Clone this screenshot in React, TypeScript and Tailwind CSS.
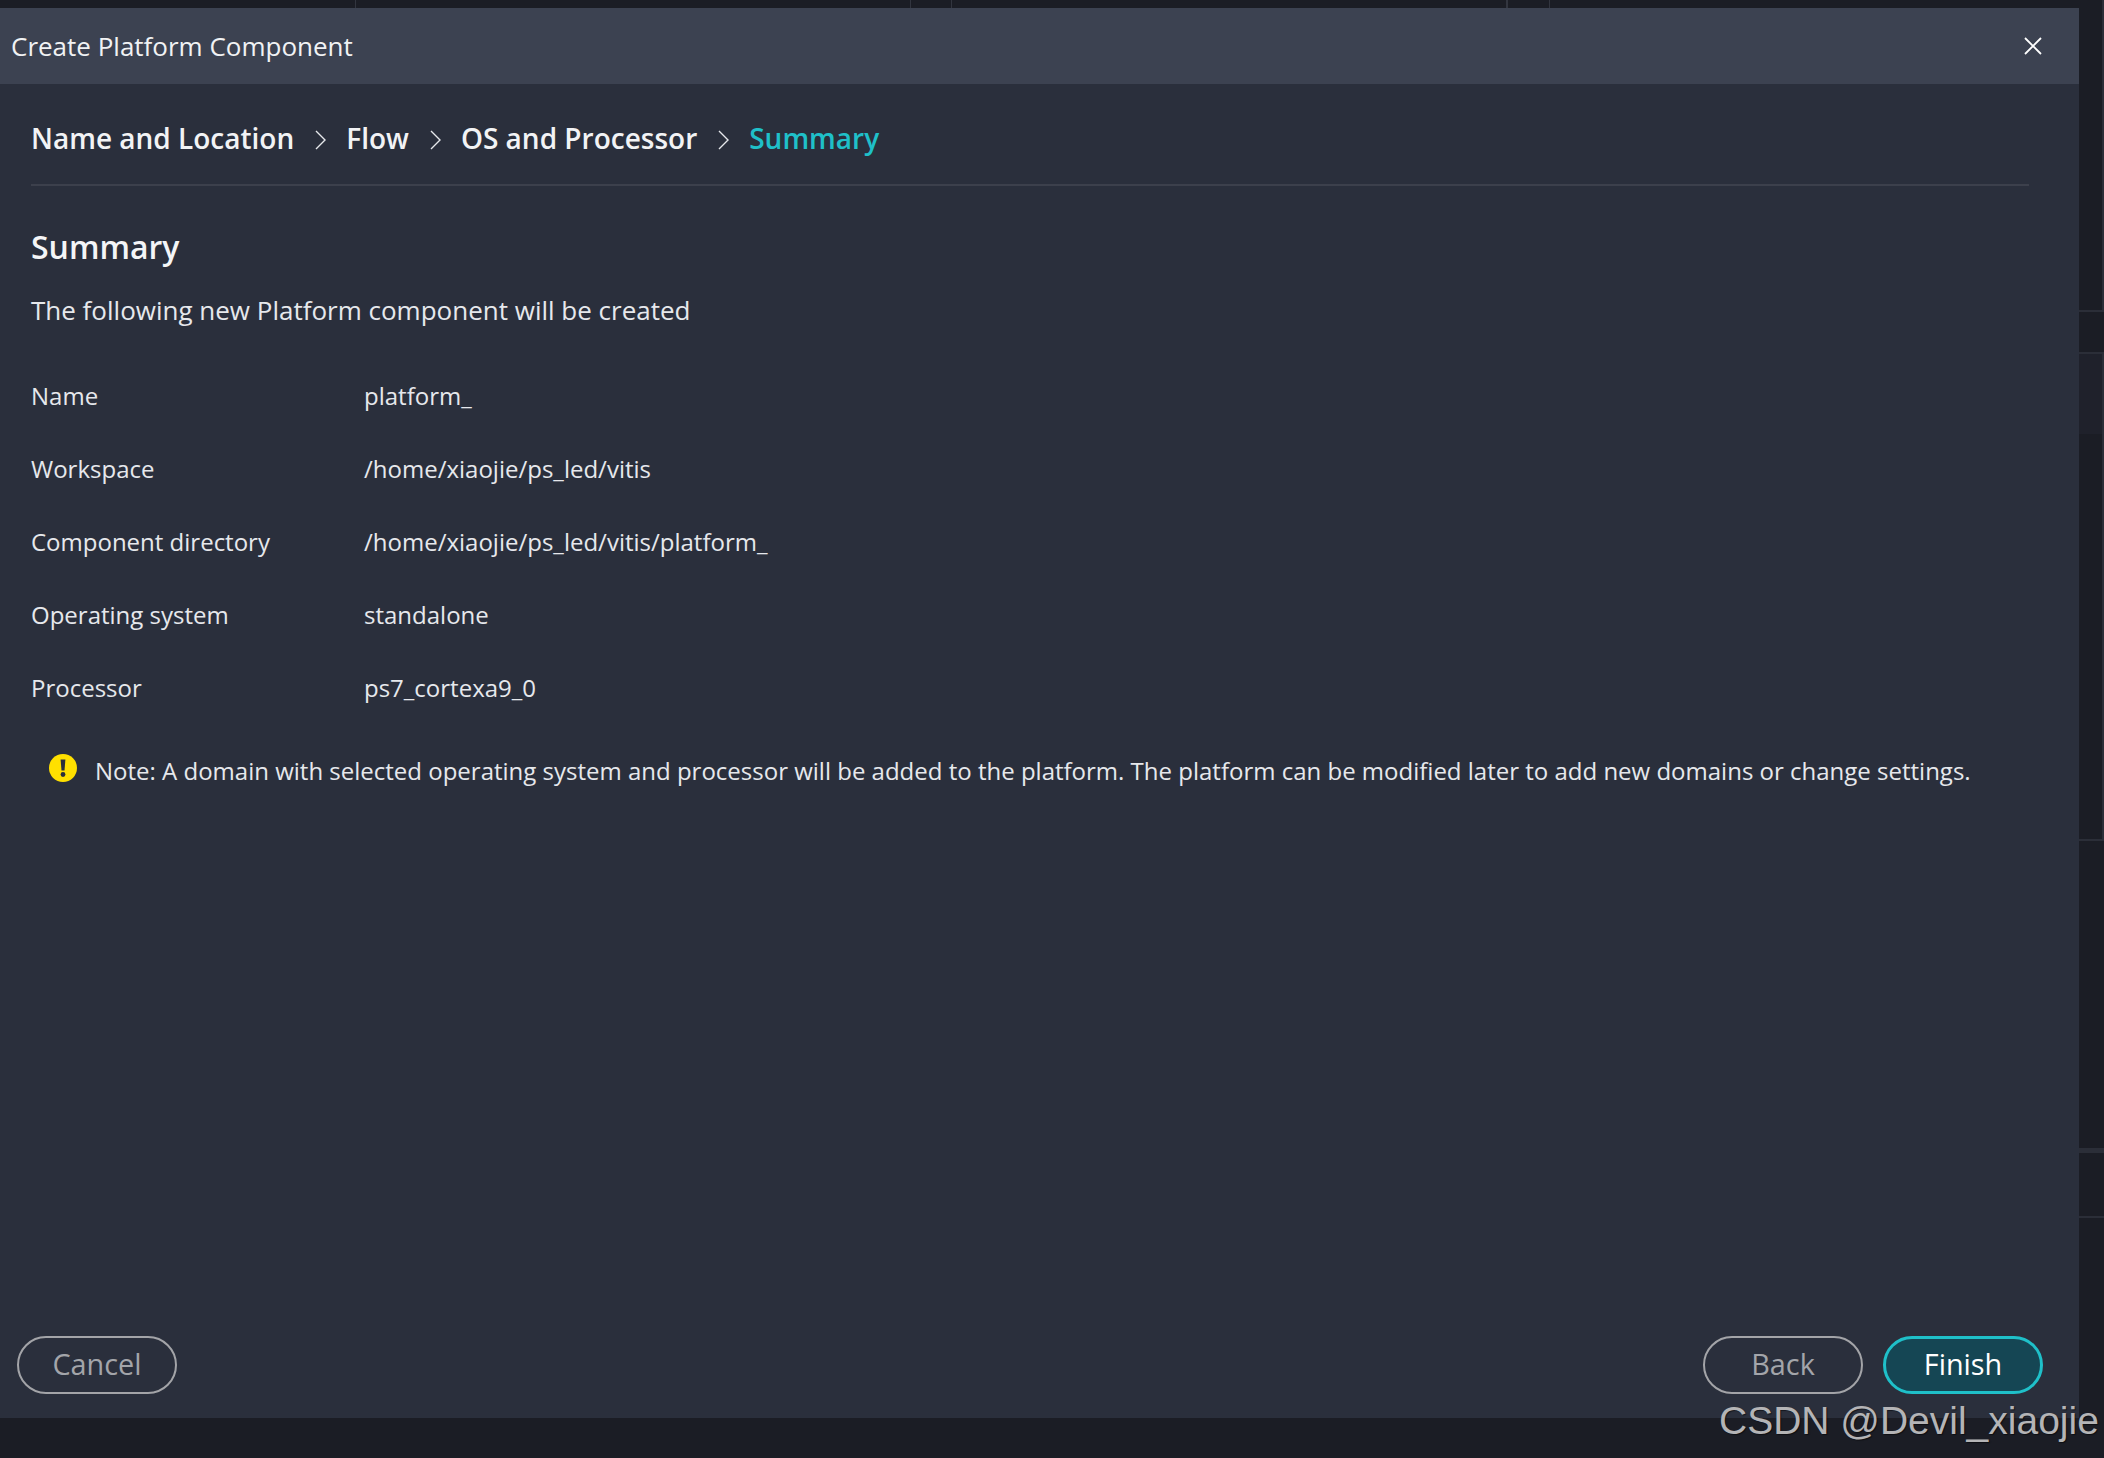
import React from 'react';

const rows = [
  ['Name', 'platform_'],
  ['Workspace', '/home/xiaojie/ps_led/vitis'],
  ['Component directory', '/home/xiaojie/ps_led/vitis/platform_'],
  ['Operating system', 'standalone'],
  ['Processor', 'ps7_cortexa9_0'],
];

const steps = ['Name and Location', 'Flow', 'OS and Processor'];

function Chevron() {
  return (
    <svg width="11" height="20" viewBox="0 0 11 20" fill="none" stroke="#e6e8ec" strokeWidth="1.4" className="ml-[21px] mr-[20px] mt-[3px] shrink-0">
      <path d="M1 1l9 9-9 9" />
    </svg>
  );
}

export default function App() {
  return (
    <div className="relative w-[2104px] h-[1458px] overflow-hidden bg-[#1b1d25] flex flex-col font-['Open_Sans','Noto_Sans',sans-serif]">
      {/* backdrop strip above the dialog */}
      <div className="h-2 flex shrink-0">
        <div className="w-[356px] border-r border-[#32353f]" />
        <div className="w-[555px] border-r border-[#32353f]" />
        <div className="w-[41px] border-r border-[#32353f]" />
        <div className="w-[556px] border-r-2 border-[#32353f]" />
        <div className="w-[42px] border-r border-[#32353f]" />
        <div className="flex-1 border-r-2 border-[#2b2e38]" />
      </div>

      <div className="flex h-[1410px] shrink-0">
        {/* dialog */}
        <div className="w-[2079px] shrink-0 flex flex-col bg-[#2a2f3c]">
          <div className="h-[76px] shrink-0 bg-[#3c4251] flex items-center justify-between pl-[11px] pr-[37px]">
            <span className="text-[26px] text-[#f1f2f4]">Create Platform Component</span>
            <svg width="18" height="18" viewBox="0 0 18 18" fill="none" stroke="#ffffff" strokeWidth="1.8">
              <path d="M1 1l16 16M17 1L1 17" />
            </svg>
          </div>

          <div className="mx-[31px] w-[1998px] h-[102px] shrink-0 border-b-2 border-[#3c404c] flex items-center pt-[8px]">
            {steps.map((s) => (
              <React.Fragment key={s}>
                <span className="text-[28px] font-semibold text-[#f2f3f5] leading-none">{s}</span>
                <Chevron />
              </React.Fragment>
            ))}
            <span className="text-[28px] font-semibold text-[#1fc0c9] leading-none">Summary</span>
          </div>

          <div className="px-[31px] pt-[39px] flex-1 flex flex-col">
            <h2 className="text-[32px] font-semibold text-[#f4f5f7] leading-[44px]">Summary</h2>
            <p className="mt-[22px] text-[26px] text-[#e6e8ec] leading-[38px]">The following new Platform component will be created</p>

            <div className="mt-[49px] flex flex-col gap-[37px]">
              {rows.map(([k, v]) => (
                <div key={k} className="flex text-[24px] text-[#e6e8ec] leading-[36px]">
                  <span className="w-[333px] shrink-0">{k}</span>
                  <span>{v}</span>
                </div>
              ))}
            </div>

            <div className="mt-[47px] ml-[18px] flex items-center text-[24px] text-[#e6e8ec] leading-[36px]">
              <svg width="28" height="28" viewBox="0 0 28 28" className="shrink-0 mt-[-6px]">
                <circle cx="14" cy="14" r="14" fill="#ffe000" />
                <path d="M11.6 5.5h4.8l-.9 11h-3z" fill="#2a2f3c" />
                <circle cx="14" cy="20.5" r="2.4" fill="#2a2f3c" />
              </svg>
              <span className="ml-[18px] whitespace-nowrap">Note: A domain with selected operating system and processor will be added to the platform. The platform can be modified later to add new domains or change settings.</span>
            </div>

            <div className="mt-auto mb-[24px] ml-[-14px] mr-[5px] flex items-center justify-between">
              <button className="w-[160px] h-[58px] pb-[2px] rounded-full border-2 border-[#a3a4a8] text-[28.8px] text-[#a3a5aa]">Cancel</button>
              <div className="flex gap-[20px]">
                <button className="w-[160px] h-[58px] pb-[2px] rounded-full border-2 border-[#a3a4a8] text-[28.8px] text-[#a3a5aa]">Back</button>
                <button className="w-[160px] h-[58px] pb-[2px] rounded-full border-[3px] border-[#1fc0c9] bg-[#154654] text-[28.8px] text-white">Finish</button>
              </div>
            </div>
          </div>
        </div>

        {/* backdrop panels to the right */}
        <div className="flex-1 flex flex-col">
          <div className="h-[304px] border-b-2 border-r-2 border-[#2b2e38]" />
          <div className="h-[42px] border-b-2 border-[#2b2e38]" />
          <div className="h-[487px] border-b-2 border-r-2 border-[#2b2e38] flex flex-col">
            <div className="h-[80px] bg-[#1f212b]" />
          </div>
          <div className="h-[312px] border-b-[5px] border-[#2b2e38]" />
          <div className="h-[65px] border-b-2 border-[#2b2e38]" />
        </div>
      </div>

      {/* watermark over the page */}
      <span className="absolute left-[1719px] top-[1397px] font-['Liberation_Sans',sans-serif] text-[39px] leading-[48px] text-[#b4b4b6] whitespace-nowrap [text-shadow:1px_1px_1px_rgba(0,0,0,0.5)]">CSDN @Devil_xiaojie</span>
    </div>
  );
}
